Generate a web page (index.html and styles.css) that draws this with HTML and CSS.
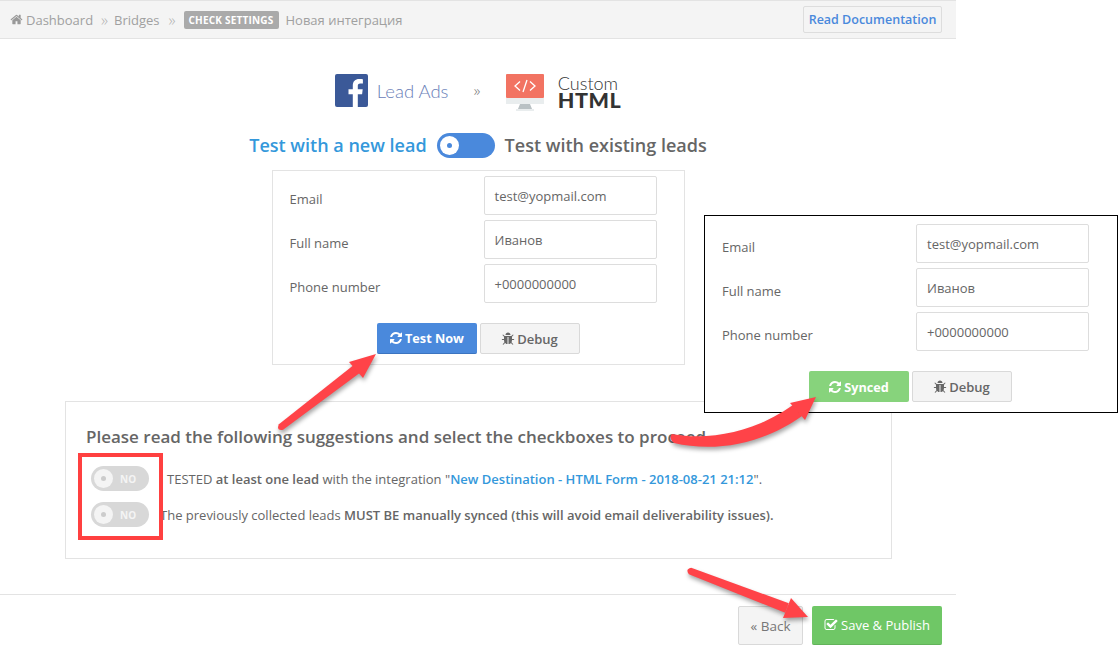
FILE: index.html
```html
<!DOCTYPE html>
<html lang="en">
<head>
<meta charset="utf-8">
<title>Check Settings</title>
<link rel="stylesheet" href="styles.css">
</head>
<body>
<svg class="defs" width="0" height="0" aria-hidden="true">
  <symbol id="i-home" viewBox="0 0 1792 1792"><path d="M1472 992v480q0 26-19 45t-45 19h-384v-384h-256v384h-384q-26 0-45-19t-19-45v-480q0-1 .5-3t.5-3l575-474 575 474q1 2 1 6zm223-69l-62 74q-8 9-21 11h-3q-13 0-21-7l-692-577-692 577q-12 8-24 7-13-2-21-11l-62-74q-8-10-7-23.5t11-21.5l719-599q32-26 76-26t76 26l244 204v-195q0-14 9-23t23-9h192q14 0 23 9t9 23v408l219 182q10 8 11 21.5t-7 23.5z"/></symbol>
  <symbol id="i-refresh" viewBox="0 0 1792 1792"><path d="M1639 1056q0 5-1 7-64 268-268 434.5t-478 166.5q-146 0-282.5-55t-243.5-157l-129 129q-19 19-45 19t-45-19-19-45v-448q0-26 19-45t45-19h448q26 0 45 19t19 45-19 45l-137 137q71 66 161 102t187 36q134 0 250-65t186-179q11-17 53-117 8-23 30-23h192q13 0 22.5 9.5t9.5 22.5zm25-800v448q0 26-19 45t-45 19h-448q-26 0-45-19t-19-45 19-45l138-138q-148-137-349-137-134 0-250 65t-186 179q-11 17-53 117-8 23-30 23h-199q-13 0-22.5-9.5t-9.5-22.5v-7q65-268 270-434.5t480-166.5q146 0 284 55.5t245 156.5l130-129q19-19 45-19t45 19 19 45z"/></symbol>
  <symbol id="i-bug" viewBox="0 0 1792 1792"><path d="M1696 960q0 26-19 45t-45 19h-224q0 171-67 290l208 209q19 19 19 45t-19 45q-18 19-45 19t-45-19l-198-197q-5 5-15 13t-42 28.5-65 36.5-82 29-97 13v-896h-128v896q-51 0-101.5-13.5t-87-33-66-39-43.5-32.5l-15-14-183 207q-20 21-48 21-24 0-43-16-19-18-20.5-44.5t15.5-46.5l202-227q-58-114-58-274h-224q-26 0-45-19t-19-45 19-45 45-19h224v-294l-173-173q-19-19-19-45t19-45 45-19 45 19l173 173h844l173-173q19-19 45-19t45 19 19 45-19 45l-173 173v294h224q26 0 45 19t19 45zm-480-576h-640q0-133 93.5-226.5t226.5-93.5 226.5 93.5 93.5 226.5z"/></symbol>
  <symbol id="i-check" viewBox="0 0 1792 1792"><path d="M1472 930v318q0 119-84.5 203.5t-203.5 84.5h-832q-119 0-203.5-84.5t-84.5-203.5v-832q0-119 84.5-203.5t203.5-84.5h832q63 0 117 25 15 7 18 23 3 17-9 29l-49 49q-10 10-23 10-3 0-9-2-23-6-45-6h-832q-66 0-113 47t-47 113v832q0 66 47 113t113 47h832q66 0 113-47t47-113v-254q0-13 9-22l64-64q10-10 23-10 6 0 12 3 20 8 20 29zm231-489l-814 814q-24 24-57 24t-57-24l-430-430q-24-24-24-57t24-57l110-110q24-24 57-24t57 24l263 263 647-647q24-24 57-24t57 24l110 110q24 24 24 57t-24 57z"/></symbol>
</svg>

<div class="page">
  <header class="topbar">
    <nav class="crumbs">
      <svg class="icon crumb-home"><use href="#i-home"/></svg>
      <span>Dashboard</span>
      <span class="sep">»</span>
      <span>Bridges</span>
      <span class="sep">»</span>
      <span class="badge">CHECK SETTINGS</span>
      <span>Новая интеграция</span>
    </nav>
    <a class="doc-btn">Read Documentation</a>
  </header>

  <div class="logos">
    <svg class="fb" viewBox="0 0 33 33">
      <rect width="33" height="33" rx="2" fill="#3b5998"/>
      <path fill="#fff" d="M22.8 33V20.2h4.3l.6-5h-4.9V12c0-1.4.4-2.4 2.5-2.4h2.6V5.200c-.5-.1-2-.2-3.800-.2-3.800 0-6.300 2.300-6.300 6.500v3.700h-4.300v5h4.300V33z"/>
    </svg>
    <span class="lead-ads">Lead Ads</span>
    <span class="logo-sep">»</span>
    <svg class="monitor" viewBox="0 0 38 37">
      <rect width="38" height="24" rx="1" fill="#f27362"/>
      <rect y="24" width="38" height="6" fill="#e9edee"/>
      <path d="M14 30h10l2 5H12z" fill="#b9c1c4"/>
      <rect x="10" y="35" width="18" height="2" fill="#e9edee"/>
      <path d="M14 7.500l-5 4.500 5 4.500M24 7.500l5 4.500-5 4.500M21 6l-4 12" fill="none" stroke="#fff" stroke-width="1.300"/>
    </svg>
    <div class="custom-html">
      <span class="custom">Custom</span>
      <span class="html">HTML</span>
    </div>
  </div>

  <div class="mode">
    <span class="mode-on">Test with a new lead</span>
    <span class="switch"><span class="knob"><span class="dot"></span></span></span>
    <span>Test with existing leads</span>
  </div>

  <section class="test-box">
    <div class="fields">
      <label>Email</label><div class="input">test@yopmail.com</div>
      <label>Full name</label><div class="input">Иванов</div>
      <label>Phone number</label><div class="input">+0000000000</div>
    </div>
    <div class="actions">
      <a class="btn btn-blue"><svg class="icon"><use href="#i-refresh"/></svg>Test Now</a>
      <a class="btn btn-light"><svg class="icon"><use href="#i-bug"/></svg>Debug</a>
    </div>
  </section>

  <section class="suggest">
    <h2>Please read the following suggestions and select the checkboxes to proceed.</h2>
    <div class="check-row">
      <span class="no-toggle"><span class="no-knob"><span class="no-dot"></span></span><b>NO</b></span>
      <p>I TESTED <strong>at least one lead</strong> with the integration "<a class="link">New Destination - HTML Form - 2018-08-21 21:12</a>".</p>
    </div>
    <div class="check-row">
      <span class="no-toggle"><span class="no-knob"><span class="no-dot"></span></span><b>NO</b></span>
      <p>The previously collected leads <strong>MUST BE manually synced (this will avoid email deliverability issues).</strong></p>
    </div>
  </section>

  <footer class="foot">
    <a class="btn btn-back">« Back</a>
    <a class="btn btn-save"><svg class="icon"><use href="#i-check"/></svg>Save &amp; Publish</a>
  </footer>
</div>

<section class="callout">
  <div class="fields">
    <label>Email</label><div class="input">test@yopmail.com</div>
    <label>Full name</label><div class="input">Иванов</div>
    <label>Phone number</label><div class="input">+0000000000</div>
  </div>
  <div class="actions">
    <a class="btn btn-green"><svg class="icon"><use href="#i-refresh"/></svg>Synced</a>
    <a class="btn btn-light"><svg class="icon"><use href="#i-bug"/></svg>Debug</a>
  </div>
</section>

<div class="red-box"></div>

<svg class="arrows" viewBox="0 0 1118 652">
  <g class="arrow">
    <path d="M278.900 424.200 L355 364 L361 372 L283.100 429.800 Q276 431 278.900 424.200Z"/>
    <path d="M376 354 L349 362 L363 378Z"/>
  </g>
  <g class="arrow">
    <path d="M672 434 C710 441 755 432 793 405 L802 416 C760 446 712 452 674 443 Q668 438 672 434Z"/>
    <path d="M816 397 L790 403 L805 420Z"/>
  </g>
  <g class="arrow">
    <path d="M691.200 567.700 L788.800 603.300 L785.200 612.700 L688.800 574.300 Q685 569 691.200 567.700Z"/>
    <path d="M808 617 L791 598 L783 618Z"/>
  </g>
</svg>
</body>
</html>
```
FILE: styles.css
```css
* { box-sizing: border-box; }
html, body { margin: 0; padding: 0; }
body {
  width: 1118px;
  height: 652px;
  overflow: hidden;
  position: relative;
  background: #fff;
  font-family: "Open Sans", "Noto Sans", sans-serif;
  font-size: 13px;
  color: #666;
}
.defs { position: absolute; }
.icon { width: 1em; height: 1em; fill: currentColor; flex: none; }

.page { width: 956px; height: 652px; display: flex; flex-direction: column; align-items: center; }

.topbar {
  width: 100%;
  height: 39px;
  flex: none;
  display: flex;
  align-items: center;
  justify-content: space-between;
  padding: 0 14px 0 10px;
  background: #f4f4f4;
  border-top: 1px solid #e3e3e3;
  border-bottom: 1px solid #e3e3e3;
}
.crumbs { display: flex; align-items: center; color: #a0a0a0; font-size: 13px; }
.crumb-home { width: 13px; height: 13px; margin-right: 3px; color: #999; }
.sep { margin: 0 6px 0 8px; color: #b0b0b0; font-size: 16px; font-weight: 300; line-height: 16px; }
.sep + span + .sep { margin: 0 8px 0 9px; }
.badge {
  width: 95px;
  height: 18px;
  margin-right: 7px;
  display: flex;
  align-items: center;
  justify-content: center;
  background: #aaa;
  color: #fff;
  font-size: 10px;
  font-weight: 700;
  letter-spacing: .2px;
  white-space: nowrap;
  border-radius: 2px;
}
.doc-btn {
  width: 139px;
  height: 27px;
  margin-top: -1px;
  display: flex;
  align-items: center;
  justify-content: center;
  border: 1px solid #ddd;
  border-radius: 2px;
  color: #4a89dc;
  font-size: 12.500px;
  font-weight: 600;
  white-space: nowrap;
}

.logos {
  height: 37px;
  margin-top: 35px;
  display: flex;
  align-items: flex-start;
  flex: none;
}
.fb { width: 33px; height: 33px; flex: none; }
.lead-ads {
  margin: 3px 0 0 9px;
  font-family: "Lato", sans-serif;
  font-weight: 300;
  font-size: 18.500px;
  line-height: 28px;
  color: #6a80b8;
  width: 72px;
  white-space: nowrap;
}
.logo-sep { margin: 5px 23px 0 25px; width: 9px; font-size: 15px; font-weight: 300; line-height: 22px; color: #777; }
.monitor { width: 38px; height: 37px; flex: none; }
.custom-html { margin-left: 14px; display: flex; flex-direction: column; color: #333; }
.custom { font-family: "Lato", sans-serif; font-weight: 300; font-size: 18px; line-height: 18px; }
.html { font-family: "Lato", sans-serif; font-weight: 900; font-size: 21.500px; line-height: 19px; letter-spacing: .5px; margin-top: -1px; }

.mode {
  margin-top: 21px;
  height: 26px;
  display: flex;
  align-items: center;
  gap: 10px;
  font-size: 18px;
  font-weight: 600;
  color: #666;
  flex: none;
}
.mode-on { color: #3498db; }
.switch {
  width: 58px;
  height: 25px;
  border-radius: 13px;
  background: #4a89dc;
  display: flex;
  align-items: center;
  padding-left: 3px;
}
.knob {
  width: 19px;
  height: 19px;
  border-radius: 50%;
  background: #fff;
  display: flex;
  align-items: center;
  justify-content: center;
}
.dot { width: 5px; height: 5px; border-radius: 50%; background: #4a89dc; }

.test-box {
  width: 413px;
  height: 195px;
  margin-top: 12px;
  padding: 5px 27px 0 17px;
  border: 1px solid #e3e3e3;
  flex: none;
}
.fields {
  display: grid;
  grid-template-columns: 194px 173px;
  grid-auto-rows: 39px;
  row-gap: 5px;
}
.fields label { display: flex; align-items: center; padding-top: 6px; font-size: 13px; color: #666; }
.input {
  display: flex;
  align-items: center;
  padding: 0 10px;
  border: 1px solid #ddd;
  border-radius: 2px;
  font-size: 13px;
  color: #666;
}
.actions { margin-top: 20px; display: flex; justify-content: center; gap: 3px; padding-left: 10px; }
.btn {
  display: flex;
  align-items: center;
  justify-content: center;
  gap: 2px;
  border-radius: 2px;
  font-weight: 600;
  font-size: 13px;
}
.btn .icon { width: 14px; height: 14px; }
.actions .btn { width: 100px; height: 31px; }
.btn-blue { background: #4a89dc; color: #fff; border-bottom: 1px solid #3b74c0; font-weight: 700; font-size: 12.700px; }
.btn-green { background: #87d37c; color: #fff; font-weight: 700; font-size: 12.700px; }
.btn-light { background: #f4f4f4; border: 1px solid #d9d9d9; color: #666; }

.suggest {
  width: 827px;
  height: 158px;
  margin-top: 36px;
  margin-left: 65px;
  padding: 22px 20px 0 20px;
  border: 1px solid #e3e3e3;
  flex: none;
  align-self: flex-start;
}
.suggest h2 { margin: 0 0 16px; font-size: 17px; line-height: 26px; font-weight: 600; color: #666; white-space: nowrap; }
.check-row { height: 25px; margin: 0 0 11px 5px; display: flex; align-items: center; gap: 11px; }
.check-row p { margin: 0; font-size: 13px; color: #666; white-space: nowrap; }
.check-row strong { font-weight: 600; }
.link { color: #3498db; font-weight: 600; }
.no-toggle {
  width: 58px;
  height: 25px;
  flex: none;
  border-radius: 13px;
  background: #d8d8d8;
  display: flex;
  align-items: center;
  padding-left: 3px;
  gap: 7px;
}
.no-knob {
  width: 19px;
  height: 19px;
  border-radius: 50%;
  background: #f4f4f4;
  display: flex;
  align-items: center;
  justify-content: center;
}
.no-dot { width: 5px; height: 5px; border-radius: 50%; background: #ccc; }
.no-toggle b { font-size: 10px; font-weight: 700; color: #f4f4f4; }

.foot {
  width: 100%;
  margin-top: 35px;
  padding: 11px 14px 0 0;
  border-top: 1px solid #e3e3e3;
  display: flex;
  justify-content: flex-end;
  gap: 9px;
}
.foot .btn { height: 39px; }
.btn-back { width: 65px; background: #f4f4f4; border: 1px solid #d9d9d9; color: #777; font-weight: 400; font-size: 13.500px; gap: 3px; }
.btn-save { width: 130px; background: #6fc766; color: #fff; gap: 3px; border-bottom: 1px solid #62b35a; font-weight: 500; }

.callout {
  position: absolute;
  left: 704px;
  top: 215px;
  width: 414px;
  height: 198px;
  padding: 8px 27px 0 17px;
  background: #fff;
  border: 1px solid #000;
}
.callout .actions { padding-left: 8px; }
.red-box {
  position: absolute;
  left: 78px;
  top: 453px;
  width: 85px;
  height: 87px;
  border: 4px solid #ff4040;
}
.arrows {
  position: absolute;
  left: 0;
  top: 0;
  width: 1118px;
  height: 652px;
  pointer-events: none;
}
.arrow { fill: #ff4348; filter: drop-shadow(1px 3px 2px rgba(0,0,0,.35)); }
```
